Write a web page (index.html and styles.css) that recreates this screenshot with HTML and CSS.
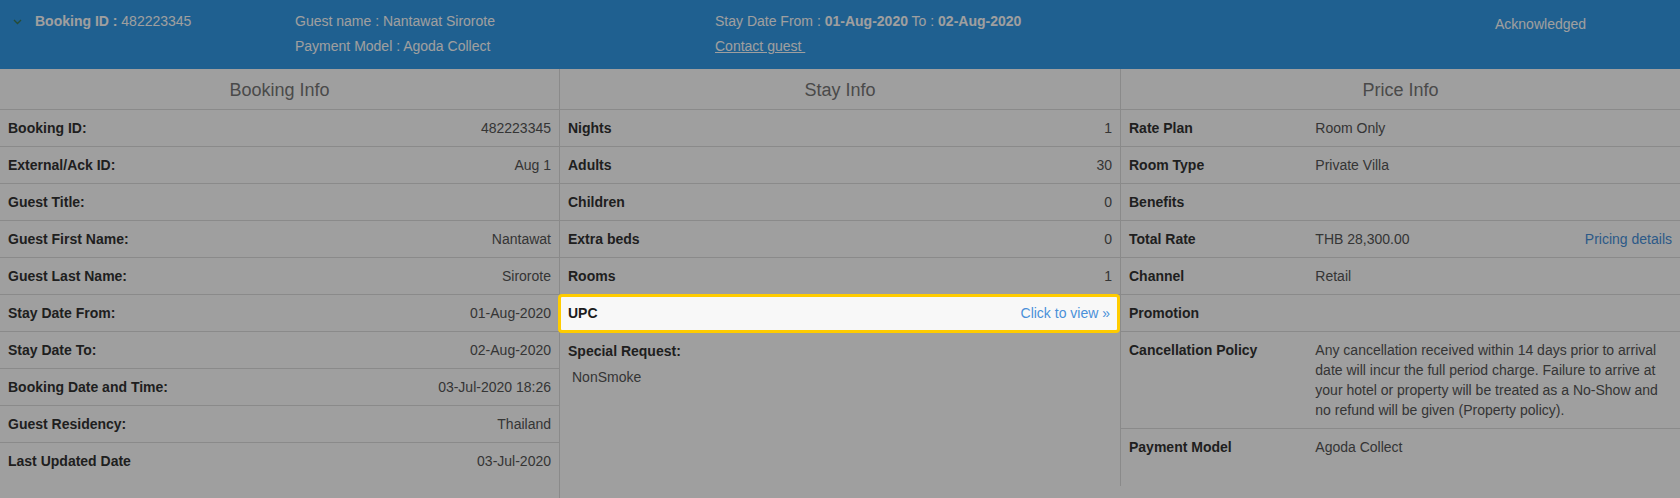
FILE: index.html
```html
<!DOCTYPE html>
<html lang="en">
<head>
<meta charset="utf-8">
<title>Booking details</title>
<link rel="stylesheet" href="styles.css">
</head>
<body>
<header class="topbar">
  <div class="bk">
    <svg class="chev" viewBox="0 0 9 6" width="9" height="6"><polyline points="1,1 4.5,4.5 8,1" fill="none" stroke="#3e7a55" stroke-width="1.4"/></svg>
    <div><b>Booking ID :</b> 482223345</div>
  </div>
  <div>
    <div>Guest name : Nantawat Sirorote</div>
    <div class="line2">Payment Model : Agoda Collect</div>
  </div>
  <div>
    <div>Stay Date From : <b>01-Aug-2020</b> To : <b>02-Aug-2020</b></div>
    <div class="line2"><a class="contact" href="#">Contact guest&nbsp;</a></div>
  </div>
  <div class="ack">Acknowledged</div>
</header>

<main class="panels">
  <section class="panel panel-booking">
    <div class="panel-title">Booking Info</div>
    <div class="row"><span class="label">Booking ID:</span><span class="value">482223345</span></div>
    <div class="row"><span class="label">External/Ack ID:</span><span class="value">Aug 1</span></div>
    <div class="row"><span class="label">Guest Title:</span><span class="value"></span></div>
    <div class="row"><span class="label">Guest First Name:</span><span class="value">Nantawat</span></div>
    <div class="row"><span class="label">Guest Last Name:</span><span class="value">Sirorote</span></div>
    <div class="row"><span class="label">Stay Date From:</span><span class="value">01-Aug-2020</span></div>
    <div class="row"><span class="label">Stay Date To:</span><span class="value">02-Aug-2020</span></div>
    <div class="row"><span class="label">Booking Date and Time:</span><span class="value">03-Jul-2020 18:26</span></div>
    <div class="row"><span class="label">Guest Residency:</span><span class="value">Thailand</span></div>
    <div class="row"><span class="label">Last Updated Date</span><span class="value">03-Jul-2020</span></div>
  </section>

  <section class="panel panel-stay">
    <div class="panel-title">Stay Info</div>
    <div class="row"><span class="label">Nights</span><span class="value">1</span></div>
    <div class="row"><span class="label">Adults</span><span class="value">30</span></div>
    <div class="row"><span class="label">Children</span><span class="value">0</span></div>
    <div class="row"><span class="label">Extra beds</span><span class="value">0</span></div>
    <div class="row"><span class="label">Rooms</span><span class="value">1</span></div>
    <div class="upc"><span class="upc-label">UPC</span><a class="upc-link" href="#">Click to view »</a></div>
    <div class="special">
      <div class="label">Special Request:</div>
      <div class="special-text">NonSmoke</div>
    </div>
  </section>

  <section class="panel panel-price">
    <div class="panel-title">Price Info</div>
    <div class="prow"><span class="label">Rate Plan</span><span class="value">Room Only</span></div>
    <div class="prow"><span class="label">Room Type</span><span class="value">Private Villa</span></div>
    <div class="prow"><span class="label">Benefits</span><span class="value"></span></div>
    <div class="prow"><span class="label">Total Rate</span><span class="value split"><span>THB 28,300.00</span><a class="link" href="#">Pricing details</a></span></div>
    <div class="prow"><span class="label">Channel</span><span class="value">Retail</span></div>
    <div class="prow"><span class="label">Promotion</span><span class="value"></span></div>
    <div class="prow"><span class="label">Cancellation Policy</span><span class="value">Any cancellation received within 14 days prior to arrival date will incur the full period charge. Failure to arrive at your hotel or property will be treated as a No-Show and no refund will be given (Property policy).</span></div>
    <div class="prow"><span class="label">Payment Model</span><span class="value">Agoda Collect</span></div>
  </section>
</main>

<div class="backdrop"></div>
</body>
</html>
```

FILE: styles.css
```css
* { box-sizing: border-box; }
html, body { margin: 0; padding: 0; }
body {
  font-family: "Liberation Sans", Arial, sans-serif;
  font-size: 14px;
  line-height: 20px;
  color: #333;
  background: #fff;
  width: 1680px;
  height: 498px;
  overflow: hidden;
}

/* top bar */
.topbar {
  height: 69px;
  background: #329ae7;
  color: #fff;
  display: grid;
  grid-template-columns: 295px 420px 780px 1fr;
  padding-top: 11px;
}
.bk { display: flex; align-items: flex-start; padding-left: 13px; }
.chev { display: block; margin: 8px 13px 0 0; }
.line2 { margin-top: 5px; }
.ack { padding-top: 3px; }
.contact { color: #fff; text-decoration: underline; }

/* panels */
.panels { display: flex; align-items: flex-start; }
.panel { width: 560px; padding-bottom: 20px; }
.panel-booking { border-right: 1px solid #ddd; padding-bottom: 19px; }
.panel-price { border-left: 1px solid #ddd; }
.panel-title {
  font-size: 18px;
  line-height: 22px;
  text-align: center;
  color: #777;
  padding: 10px 0 8px;
  border-bottom: 1px solid #ddd;
}
.row {
  display: flex;
  justify-content: space-between;
  padding: 8px;
  min-height: 37px;
  border-bottom: 1px solid #ddd;
}
.panel-booking .row:last-child { border-bottom: none; }
.label { font-weight: bold; color: #333; }
.value { color: #555; }

/* highlighted UPC row */
.upc {
  position: relative;
  z-index: 20;
  display: flex;
  justify-content: space-between;
  margin-left: -2px;
  margin-top: -1px;
  padding: 6px 7px 7px 7px;
  border: 3px solid #ffcc00;
  border-radius: 4px;
  background: #f8f8f8;
}
.upc-label { font-weight: bold; color: #1c1c1c; }
.upc-link { color: #4a90d9; text-decoration: none; }

.special { padding: 8px 8px; }
.special-text { margin-top: 6px; padding-left: 4px; color: #555; }

/* price rows */
.prow {
  display: grid;
  grid-template-columns: 1fr 2fr;
  border-bottom: 1px solid #ddd;
  min-height: 37px;
}
.prow:last-child { border-bottom: none; }
.prow > span { padding: 8px; }
.split { display: flex; justify-content: space-between; }
.link { color: #4790da; text-decoration: none; }

.backdrop {
  position: fixed;
  inset: 0;
  background: rgba(0, 0, 0, 0.376);
  z-index: 10;
}
```
